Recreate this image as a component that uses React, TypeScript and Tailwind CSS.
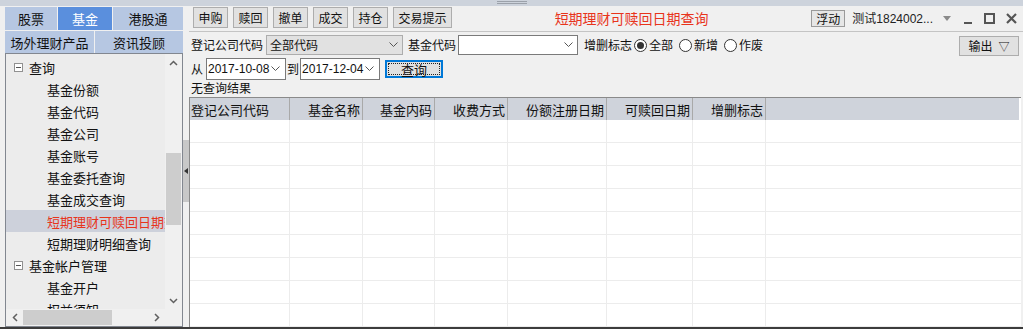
import { FC, ReactNode } from "react";

const Chevron: FC<{ className?: string }> = ({ className }) => (
  <svg width="9" height="6" viewBox="0 0 9 6" className={className}>
    <polyline points="0.5,0.5 4.5,4.5 8.5,0.5" fill="none" stroke="#555" strokeWidth="1" />
  </svg>
);

const ToolButton: FC<{ children: ReactNode; wide?: boolean }> = ({ children, wide }) => (
  <div
    className={`h-[21px] ${wide ? "w-[59px]" : "w-[35px]"} flex items-center justify-center border border-[#adadad] bg-[#e1e1e1] text-[12px]`}
  >
    {children}
  </div>
);

const Radio: FC<{ checked?: boolean; label: string }> = ({ checked, label }) => (
  <div className="flex items-center gap-[2px]">
    <div className="w-[13px] h-[13px] rounded-full border border-[#333] bg-white flex items-center justify-center">
      {checked ? <div className="w-[7px] h-[7px] rounded-full bg-[#333]" /> : null}
    </div>
    <span>{label}</span>
  </div>
);

const DateBox: FC<{ value: string }> = ({ value }) => (
  <div className="w-[80px] h-[22px] flex items-center justify-between border border-[#7a7a7a] bg-white pl-[1px] pr-[5px] font-['Liberation_Sans',sans-serif] text-[12px]">
    <span>{value}</span>
    <Chevron />
  </div>
);

const treeItems: { label: string; level: number; selected?: boolean }[] = [
  { label: "查询", level: 0 },
  { label: "基金份额", level: 1 },
  { label: "基金代码", level: 1 },
  { label: "基金公司", level: 1 },
  { label: "基金账号", level: 1 },
  { label: "基金委托查询", level: 1 },
  { label: "基金成交查询", level: 1 },
  { label: "短期理财可赎回日期查询", level: 1, selected: true },
  { label: "短期理财明细查询", level: 1 },
  { label: "基金帐户管理", level: 0 },
  { label: "基金开户", level: 1 },
  { label: "权益须知", level: 1 },
];

const columns: { label: string; w: string; left?: boolean }[] = [
  { label: "登记公司代码", w: "w-[100px]", left: true },
  { label: "基金名称", w: "w-[73px]" },
  { label: "基金内码", w: "w-[72px]" },
  { label: "收费方式", w: "w-[73px]" },
  { label: "份额注册日期", w: "w-[99px]" },
  { label: "可赎回日期", w: "w-[86px]" },
  { label: "增删标志", w: "w-[73px]" },
];

const MinusBox = () => (
  <div className="w-[9px] h-[9px] border border-[#919191] bg-white flex items-center justify-center">
    <div className="w-[5px] h-[1px] bg-[#555]" />
  </div>
);

export default function App() {
  return (
    <div className="w-[1023px] h-[329px] flex flex-col bg-[#f0f0f0] overflow-hidden font-['Noto_Sans_CJK_SC',sans-serif] text-[12px] text-[#111] leading-none">
      {/* top strip */}
      <div className="h-[6px] shrink-0 bg-[#cdd3dc] flex flex-col items-center pt-[1px] gap-[1px]">
        <div className="w-[30px] h-[1px] bg-[#9ba1aa]" />
        <div className="w-[30px] h-[1px] bg-[#9ba1aa]" />
      </div>

      <div className="flex h-[321px]">
        {/* left panel */}
        <div className="w-[183px] shrink-0 pl-[5px] pt-[1px] flex flex-col">
          <div className="flex h-[23px] gap-[1px] text-[13px]">
            <div className="w-[52px] flex items-center justify-center bg-[#b6c7e2]">股票</div>
            <div className="w-[54px] flex items-center justify-center bg-[#5a8fdd] text-white">基金</div>
            <div className="flex-1 flex items-center justify-center bg-[#b6c7e2]">港股通</div>
          </div>
          <div className="flex h-[22px] gap-[1px] mt-[1px] text-[13px]">
            <div className="w-[89px] flex items-center justify-center bg-[#b6c7e2]">场外理财产品</div>
            <div className="flex-1 flex items-center justify-center bg-[#b6c7e2]">资讯投顾</div>
          </div>
          <div className="flex-1 flex flex-col border border-[#828790] bg-[#ececec] min-h-0">
            <div className="flex flex-1 min-h-0">
              <div className="flex-1 overflow-hidden pt-[2px] text-[13px]">
                {treeItems.map((it) => (
                  <div
                    key={it.label}
                    className={`h-[22px] flex items-center whitespace-nowrap ${it.selected ? "bg-[#cdd1db] text-[#e8341c]" : ""} ${it.level === 0 ? "pl-[8px] gap-[6px]" : "pl-[41px]"}`}
                  >
                    {it.level === 0 ? <MinusBox /> : null}
                    <span>{it.label}</span>
                  </div>
                ))}
              </div>
              {/* vertical scrollbar */}
              <div className="w-[17px] shrink-0 bg-[#f0f0f0] flex flex-col">
                <div className="h-[17px] flex items-center justify-center text-[#606060]">
                  <svg width="9" height="6" viewBox="0 0 9 6">
                    <polyline points="1,5 4.5,1.5 8,5" fill="none" stroke="#606060" strokeWidth="1.5" />
                  </svg>
                </div>
                <div className="h-[82px]" />
                <div className="h-[72px] mx-[1px] bg-[#cdcdcd]" />
                <div className="flex-1" />
                <div className="h-[17px] flex items-center justify-center">
                  <svg width="9" height="6" viewBox="0 0 9 6">
                    <polyline points="1,1 4.5,4.5 8,1" fill="none" stroke="#606060" strokeWidth="1.5" />
                  </svg>
                </div>
              </div>
            </div>
            {/* horizontal scrollbar */}
            <div className="h-[17px] shrink-0 flex bg-[#f0f0f0]">
              <div className="w-[17px] flex items-center justify-center">
                <svg width="6" height="9" viewBox="0 0 6 9">
                  <polyline points="5,1 1.5,4.5 5,8" fill="none" stroke="#606060" strokeWidth="1.5" />
                </svg>
              </div>
              <div className="w-[89px] my-[1px] bg-[#cdcdcd]" />
              <div className="flex-1" />
              <div className="w-[17px] flex items-center justify-center">
                <svg width="6" height="9" viewBox="0 0 6 9">
                  <polyline points="1,1 4.5,4.5 1,8" fill="none" stroke="#606060" strokeWidth="1.5" />
                </svg>
              </div>
              <div className="w-[17px]" />
            </div>
          </div>
        </div>

        {/* splitter */}
        <div className="w-[6px] shrink-0 flex flex-col">
          <div className="h-[134px]" />
          <div className="h-[62px] bg-[#c8c8c8] flex items-center justify-center">
            <svg width="4" height="6" viewBox="0 0 4 6">
              <polygon points="4,0 0,3 4,6" fill="#333" />
            </svg>
          </div>
        </div>

        {/* main */}
        <div className="flex-1 flex flex-col min-w-0">
          <div className="h-[26px] shrink-0 flex items-start border-b border-[#c4c4c4] pl-[4px] pt-[1px]">
            <div className="flex gap-[5px]">
              <ToolButton>申购</ToolButton>
              <ToolButton>赎回</ToolButton>
              <ToolButton>撤单</ToolButton>
              <ToolButton>成交</ToolButton>
              <ToolButton>持仓</ToolButton>
              <ToolButton wide>交易提示</ToolButton>
            </div>
            <div className="flex-1 h-[21px] flex items-center justify-center text-[14px] text-[#e8341c]">
              短期理财可赎回日期查询
            </div>
            <div className="flex items-center h-[21px] pr-[6px] mt-[1px]">
              <div className="h-[17px] w-[34px] flex items-center justify-center border border-[#9a9a9a] bg-[#e6e6e6]">
                浮动
              </div>
              <div className="ml-[7px] text-[12px] text-[#222]">
                测试<span className="font-['Liberation_Sans',sans-serif]">1824002...</span>
              </div>
              <svg width="8" height="5" viewBox="0 0 8 5" className="ml-[10px]">
                <polygon points="0,0 8,0 4,5" fill="#8a8a8a" />
              </svg>
              <svg width="10" height="12" viewBox="0 0 10 12" className="ml-[12px]">
                <rect x="1" y="9" width="8" height="2" fill="#555" />
              </svg>
              <svg width="11" height="11" viewBox="0 0 11 11" className="ml-[11px]">
                <rect x="1" y="1" width="9" height="9" fill="none" stroke="#555" strokeWidth="2" />
              </svg>
              <svg width="11" height="11" viewBox="0 0 11 11" className="ml-[11px]">
                <path d="M1 1 L10 10 M10 1 L1 10" stroke="#555" strokeWidth="2.2" />
              </svg>
            </div>
          </div>

          <div className="h-[20px] mt-[3px] flex items-center pl-[2px] pr-[4px]">
            <span>登记公司代码</span>
            <div className="ml-[3px] w-[137px] h-[20px] flex items-center justify-between border border-[#adadad] bg-[#e1e1e1] pl-[3px] pr-[4px]">
              <span className="text-[12px]">全部代码</span>
              <Chevron />
            </div>
            <span className="ml-[5px]">基金代码</span>
            <div className="ml-[2px] w-[120px] h-[20px] flex items-center justify-end border border-[#7a7a7a] bg-white pr-[4px]">
              <Chevron />
            </div>
            <span className="ml-[6px]">增删标志</span>
            <div className="ml-[2px] flex gap-[6px]">
              <Radio checked label="全部" />
              <Radio label="新增" />
              <Radio label="作废" />
            </div>
            <div className="flex-1" />
            <div className="w-[60px] h-[20px] mt-[2px] flex items-center justify-center gap-[6px] border border-[#adadad] bg-[#e1e1e1]">
              <span>输出</span>
              <span className="text-[11px]">▽</span>
            </div>
          </div>

          <div className="h-[22px] mt-[3px] flex items-center pl-[2px]">
            <span>从</span>
            <div className="ml-[3px]">
              <DateBox value="2017-10-08" />
            </div>
            <span className="ml-[1px]">到</span>
            <div className="ml-[1px]">
              <DateBox value="2017-12-04" />
            </div>
            <div className="ml-[5px] w-[58px] h-[18px] border-2 border-[#0078d7] bg-[#e1e1e1] p-[1px]">
              <div className="w-full h-full outline-1 outline-dotted outline-[#222] -outline-offset-1 flex items-center justify-center text-[13px]">
                查询
              </div>
            </div>
          </div>

          <div className="h-[16px] flex items-center pl-[2px]">无查询结果</div>

          <div className="flex-1 mt-[1px] mr-[2px] flex flex-col bg-white border-t border-l border-[#8a8a8a] min-h-0 overflow-hidden">
            <div className="h-[22px] shrink-0 flex bg-[#cfd3db] text-[13px] mr-[2px]">
              {columns.map((c) => (
                <div
                  key={c.label}
                  className={`${c.w} shrink-0 flex items-center border-r border-[#a9a9a9] ${c.left ? "justify-start pl-[1px]" : "justify-end pr-[2px]"}`}
                >
                  {c.label}
                </div>
              ))}
              <div className="flex-1" />
            </div>
            {Array.from({ length: 9 }).map((_, i) => (
              <div key={i} className="h-[23px] shrink-0 flex border-b border-[#ececec]">
                {columns.map((c) => (
                  <div key={c.label} className={`${c.w} shrink-0 border-r border-[#ececec]`} />
                ))}
                <div className="flex-1" />
              </div>
            ))}
          </div>
        </div>
      </div>

      <div className="h-[2px] shrink-0 bg-[#3c3c3c]" />
    </div>
  );
}
